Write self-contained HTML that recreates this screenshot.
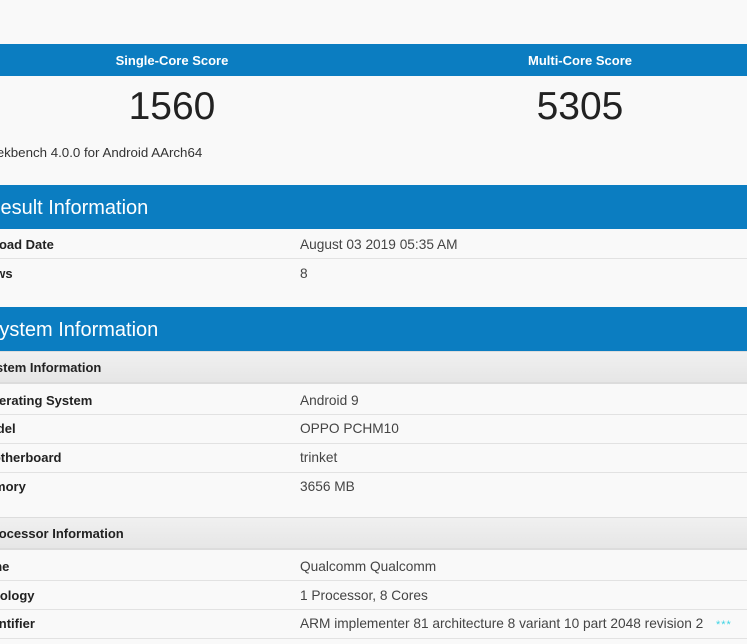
<!DOCTYPE html>
<html><head><meta charset="utf-8"><style>
html,body{margin:0;padding:0}
body{width:747px;height:644px;overflow:hidden;background:#f9f9f9;font-family:"Liberation Sans",Arial,sans-serif;position:relative;color:#222}
.a{position:absolute;white-space:nowrap}
.band{position:absolute;left:0;width:747px;background:#0b7dc1;color:#fff}
.lab{position:absolute;left:-22px;font-weight:bold;font-size:13px;color:#222;white-space:nowrap}
.val{position:absolute;left:300px;font-size:13.7px;color:#444;white-space:nowrap}
.line{position:absolute;left:0;width:747px;height:1px;background:#e2e2e2}
.sub{position:absolute;left:0;width:747px;height:30px;background:linear-gradient(#f0f0f0,#e6e6e6);border-top:1px solid #ddd;border-bottom:2px solid #dcdcdc}
</style></head><body>
<div class="band" style="top:44px;height:32px"></div>
<div class="a" style="top:53px;left:0;width:344px;text-align:center;color:#fff;font-weight:bold;font-size:13px">Single-Core Score</div>
<div class="a" style="top:53px;left:408px;width:344px;text-align:center;color:#fff;font-weight:bold;font-size:13px">Multi-Core Score</div>
<div class="a" style="top:85px;left:0;width:344px;text-align:center;font-size:39px;color:#222">1560</div>
<div class="a" style="top:85px;left:408px;width:344px;text-align:center;font-size:39px;color:#222">5305</div>
<div class="a" style="top:145px;left:-21px;font-size:13.3px;color:#333">Geekbench 4.0.0 for Android AArch64</div>

<div class="band" style="top:185px;height:44px"></div>
<div class="a" style="top:197px;left:-14px;font-size:20px;color:#fff">Result Information</div>
<div class="lab" style="top:237px">Upload Date</div><div class="val" style="top:237px">August 03 2019 05:35 AM</div>
<div class="line" style="top:258px"></div>
<div class="lab" style="top:266px;left:-24px">Views</div><div class="val" style="top:266px">8</div>

<div class="band" style="top:307px;height:44px"></div>
<div class="a" style="top:319px;left:-14px;font-size:20px;color:#fff">System Information</div>
<div class="sub" style="top:351px"></div>
<div class="lab" style="top:360px;left:-20px">System Information</div>
<div class="lab" style="top:393px;left:-19px">Operating System</div><div class="val" style="top:393px">Android 9</div>
<div class="line" style="top:414px"></div>
<div class="lab" style="top:421px;left:-22px">Model</div><div class="val" style="top:421px">OPPO PCHM10</div>
<div class="line" style="top:443px"></div>
<div class="lab" style="top:450px;left:-18px">Motherboard</div><div class="val" style="top:450px">trinket</div>
<div class="line" style="top:472px"></div>
<div class="lab" style="top:479px;left:-24px">Memory</div><div class="val" style="top:479px">3656 MB</div>

<div class="sub" style="top:517px"></div>
<div class="lab" style="top:526px;left:-15px">Processor Information</div>
<div class="lab" style="top:559px;left:-26px">Name</div><div class="val" style="top:559px">Qualcomm Qualcomm</div>
<div class="line" style="top:580px"></div>
<div class="lab" style="top:588px;left:-23px">Topology</div><div class="val" style="top:588px">1 Processor, 8 Cores</div>
<div class="line" style="top:609px"></div>
<div class="lab" style="top:616px;left:-20px">Identifier</div><div class="val" style="top:616px">ARM implementer 81 architecture 8 variant 10 part 2048 revision 2</div>
<div class="a" style="top:619px;left:716px;font-size:11px;color:#3fd4e4;letter-spacing:1px">***</div>
<div class="line" style="top:638px"></div>
</body></html>
